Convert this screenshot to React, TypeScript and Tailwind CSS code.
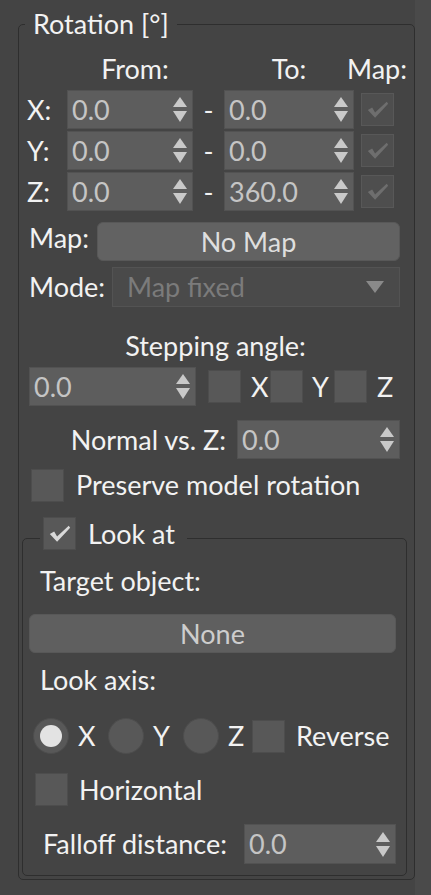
import React from "react";

const CheckMark = ({ color }: { color: string }) => (
  <svg width="32" height="32" viewBox="0 0 32 32">
    <path d="M6 16 L10.5 13.5 L13.5 18.5 L25.5 7.5 L27 9.5 L13.5 24 Z" fill={color} />
  </svg>
);

const Checkbox = ({
  checked,
  disabled,
  className = "",
}: {
  checked?: boolean;
  disabled?: boolean;
  className?: string;
}) => (
  <div
    className={`flex h-[33px] w-[33px] shrink-0 items-center justify-center border ${
      disabled ? "border-[#585858] bg-[#4e4e4e]" : "border-[#4d4d4d] bg-[#585858]"
    } ${className}`}
  >
    {checked && <CheckMark color={disabled ? "#6e6e6e" : "#d9d9d9"} />}
  </div>
);

const Radio = ({ selected }: { selected?: boolean }) => (
  <div className="flex h-[36px] w-[36px] shrink-0 items-center justify-center rounded-full border border-[#4d4d4d] bg-[#585858]">
    {selected && <div className="h-[22px] w-[22px] rounded-full bg-[#e3e3e3]" />}
  </div>
);

const SpinArrows = () => (
  <svg width="14" height="25" viewBox="0 0 14 25">
    <path d="M7 0 L14 10 L0 10 Z" fill="#c9c9c9" />
    <path d="M0 14 L14 14 L7 25 Z" fill="#c9c9c9" />
  </svg>
);

const Spinner = ({ value, className = "" }: { value: string; className?: string }) => (
  <div
    className={`flex shrink-0 items-center justify-between border border-[#525252] bg-[#5d5d5d] pl-[4px] pr-[5px] text-[#c5c5c5] ${className}`}
  >
    <span>{value}</span>
    <SpinArrows />
  </div>
);

const axes = [
  { axis: "X", from: "0.0", to: "0.0" },
  { axis: "Y", from: "0.0", to: "0.0" },
  { axis: "Z", from: "0.0", to: "360.0" },
];

export default function App() {
  return (
    <div className="flex h-[895px] w-[431px] overflow-hidden bg-[#444444] font-[family-name:Lato,sans-serif] text-[27px] leading-[30px] text-[#f2f2f2]">
      <div className="w-[415px] shrink-0">
        <fieldset className="ml-[18px] mt-[9px] w-[397px] min-w-0 rounded-[5px] border border-[#2e2e2e]">
          <legend className="ml-[6px] px-[8px] leading-[30px]">Rotation [°]</legend>
          <div className="pb-[3px] pl-[8px] pr-[14px] pt-[15px]">
            {/* column headers */}
            <div className="flex h-[30px] whitespace-nowrap">
              <div className="w-[40px]" />
              <div className="w-[126px] pl-[10px] text-center">From:</div>
              <div className="w-[31px]" />
              <div className="w-[130px] text-center">To:</div>
              <div className="w-[7px]" />
              <div className="flex w-[32px] justify-center">Map:</div>
            </div>

            <div className="mt-[6px] flex flex-col gap-[2px]">
              {axes.map((r) => (
                <div key={r.axis} className="flex h-[39px] items-center">
                  <div className="w-[40px]">{r.axis}:</div>
                  <Spinner value={r.from} className="h-[39px] w-[126px]" />
                  <div className="w-[31px] text-center">-</div>
                  <Spinner value={r.to} className="h-[39px] w-[130px]" />
                  <Checkbox checked disabled className="ml-[7px] h-[32px] w-[32px]" />
                </div>
              ))}
            </div>

            <div className="mt-[11px] flex h-[39px] items-center">
              <div className="w-[70px] pb-[8px] pl-[2px]">Map:</div>
              <div className="flex h-[39px] flex-1 items-center justify-center rounded-[6px] border border-[#585858] bg-[#626262] text-[#dedede]">
                No Map
              </div>
            </div>

            <div className="mt-[6px] flex h-[40px] items-center">
              <div className="w-[85px] pl-[2px]">Mode:</div>
              <div className="flex h-[40px] flex-1 items-center justify-between border border-[#535353] bg-[#4a4a4a] pl-[14px] pr-[15px] text-[#7b7b7b]">
                <span>Map fixed</span>
                <svg width="18" height="12" viewBox="0 0 18 12">
                  <path d="M0 0 L18 0 L9 12 Z" fill="#8a8a8a" />
                </svg>
              </div>
            </div>

            <div className="mt-[24px] pl-[4px] text-center">Stepping angle:</div>

            <div className="mt-[6px] flex h-[39px] items-center pl-[2px]">
              <Spinner value="0.0" className="h-[39px] w-[167px]" />
              <Checkbox className="ml-[12px]" />
              <span className="ml-[10px] w-[19px]">X</span>
              <Checkbox />
              <span className="ml-[9px] w-[22px]">Y</span>
              <Checkbox />
              <span className="ml-[10px]">Z</span>
            </div>

            <div className="mt-[14px] flex h-[39px] items-center justify-end gap-[11px]">
              <span>Normal vs. Z:</span>
              <Spinner value="0.0" className="h-[39px] w-[163px]" />
            </div>

            <div className="mt-[10px] flex h-[32px] items-center gap-[12px] pl-[4px]">
              <Checkbox className="h-[32px] w-[32px]" />
              <span>Preserve model rotation</span>
            </div>

            <fieldset className="-ml-[5px] mt-[16px] w-[385px] min-w-0 rounded-[5px] border border-[#2e2e2e]">
              <legend className="ml-[17px] pb-[9px] pl-[3px] pr-[12px]">
                <div className="flex items-center gap-[12px]">
                  <Checkbox checked />
                  <span>Look at</span>
                </div>
              </legend>
              <div className="pb-[11px] pl-[6px] pr-[10px]">
                <div className="mt-[7px] pl-[11px]">Target object:</div>
                <div className="mt-[18px] flex h-[39px] items-center justify-center rounded-[6px] border border-[#585858] bg-[#5f5f5f] text-[#cdcdcd]">
                  None
                </div>
                <div className="mt-[12px] pl-[11px]">Look axis:</div>

                <div className="mt-[23px] flex h-[36px] items-center pl-[4px]">
                  <Radio selected />
                  <span className="ml-[9px] w-[30px]">X</span>
                  <Radio />
                  <span className="ml-[9px] w-[30px]">Y</span>
                  <Radio />
                  <span className="ml-[9px] w-[24px]">Z</span>
                  <Checkbox />
                  <span className="ml-[11px]">Reverse</span>
                </div>

                <div className="mt-[19px] flex h-[33px] items-center gap-[11px] pl-[6px]">
                  <Checkbox />
                  <span>Horizontal</span>
                </div>

                <div className="mt-[18px] flex h-[40px] items-center pl-[14px]">
                  <span>Falloff distance:</span>
                  <Spinner value="0.0" className="ml-auto h-[40px] w-[152px]" />
                </div>
              </div>
            </fieldset>
          </div>
        </fieldset>
      </div>
      <div className="flex-1 bg-[#4a4a4a]" />
    </div>
  );
}
